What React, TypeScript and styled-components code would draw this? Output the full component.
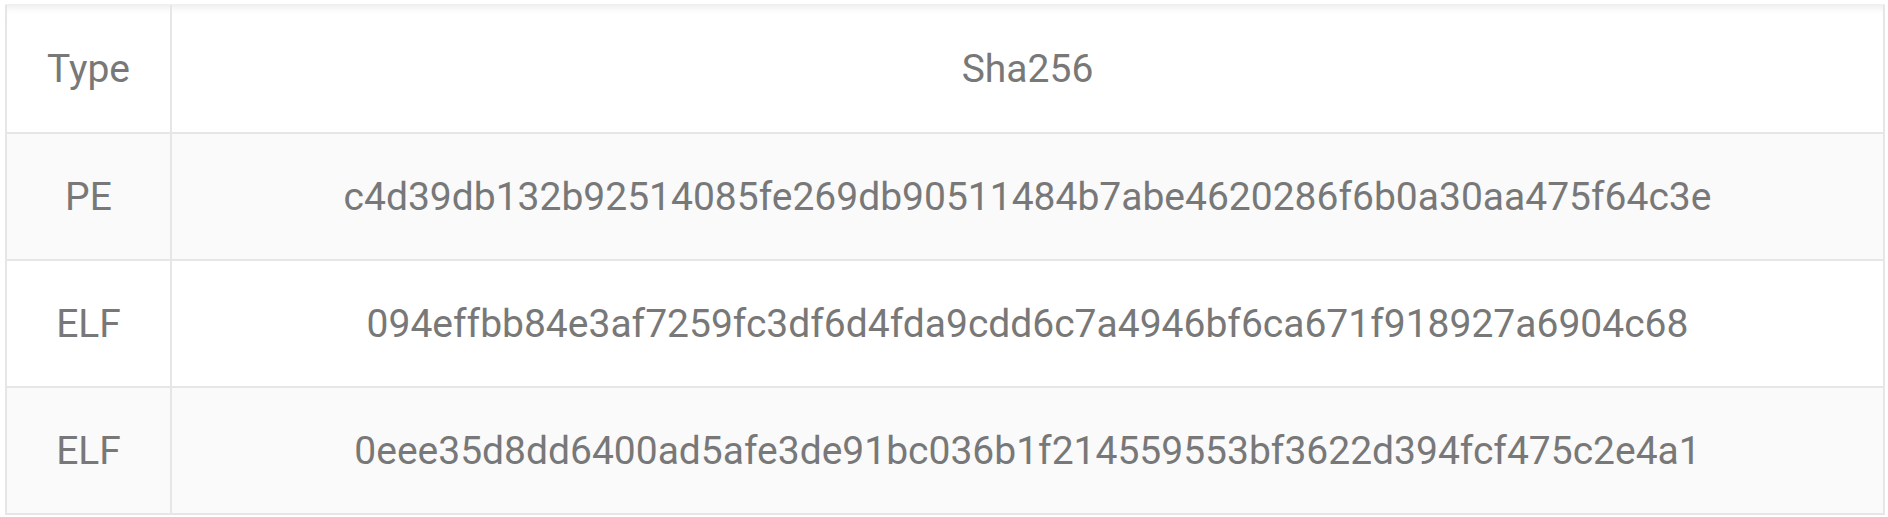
import React from 'react';
import styled, { createGlobalStyle } from 'styled-components';

const GlobalStyle = createGlobalStyle`
    html, body {
        margin: 0;
        padding: 0;
        background: #ffffff;
    }
    body {
        font-family: Roboto, "Liberation Sans", sans-serif;
    }
`

type Sample = {
    type: string;
    sha256: string;
};

const samples: Sample[] = [
    { type: 'PE', sha256: 'c4d39db132b92514085fe269db90511484b7abe4620286f6b0a30aa475f64c3e' },
    { type: 'ELF', sha256: '094effbb84e3af7259fc3df6d4fda9cdd6c7a4946bf6ca671f918927a6904c68' },
    { type: 'ELF', sha256: '0eee35d8dd6400ad5afe3de91bc036b1f214559553bf3622d394fcf475c2e4a1' },
];

export default function App() {
    return (
        <>
            <GlobalStyle />
            <Page>
                <TableWrap>
                    <HashTable>
                        <thead>
                            <tr>
                                <HeadCell $narrow>Type</HeadCell>
                                <HeadCell>Sha256</HeadCell>
                            </tr>
                        </thead>
                        <tbody>
                            {samples.map((s, i) => (
                                <Row key={s.sha256} $striped={i % 2 === 0}>
                                    <Cell $narrow>{s.type}</Cell>
                                    <Cell>{s.sha256}</Cell>
                                </Row>
                            ))}
                        </tbody>
                    </HashTable>
                </TableWrap>
            </Page>
        </>
    );
}

const Page = styled.div`
    padding: 5px 3px 0 5px;
`

const TableWrap = styled.div`
    width: 1880px;
    box-shadow: inset 0 7px 8px -5px rgba(0, 0, 0, 0.09);
    border-top: 1px solid #f0f0f0;
    margin-top: -1px;
`

const HashTable = styled.table`
    width: 100%;
    border-collapse: collapse;
    border-left: 2px solid #e6e6e6;
    border-right: 2px solid #e6e6e6;
    color: #787878;
    font-size: 39px;
    font-weight: 400;
    text-align: center;
`

const HeadCell = styled.th<{ $narrow?: boolean }>`
    height: 127px;
    padding: 0;
    font-weight: 400;
    width: ${p => (p.$narrow ? '163px' : 'auto')};
    border-bottom: 2px solid #e6e6e6;
    border-right: ${p => (p.$narrow ? '2px solid #e6e6e6' : 'none')};
`

const Row = styled.tr<{ $striped: boolean }>`
    background: ${p => (p.$striped ? '#fafafa' : '#ffffff')};
`

const Cell = styled.td<{ $narrow?: boolean }>`
    height: 125px;
    padding: 0;
    border-bottom: 2px solid #e6e6e6;
    border-right: ${p => (p.$narrow ? '2px solid #e6e6e6' : 'none')};
`
